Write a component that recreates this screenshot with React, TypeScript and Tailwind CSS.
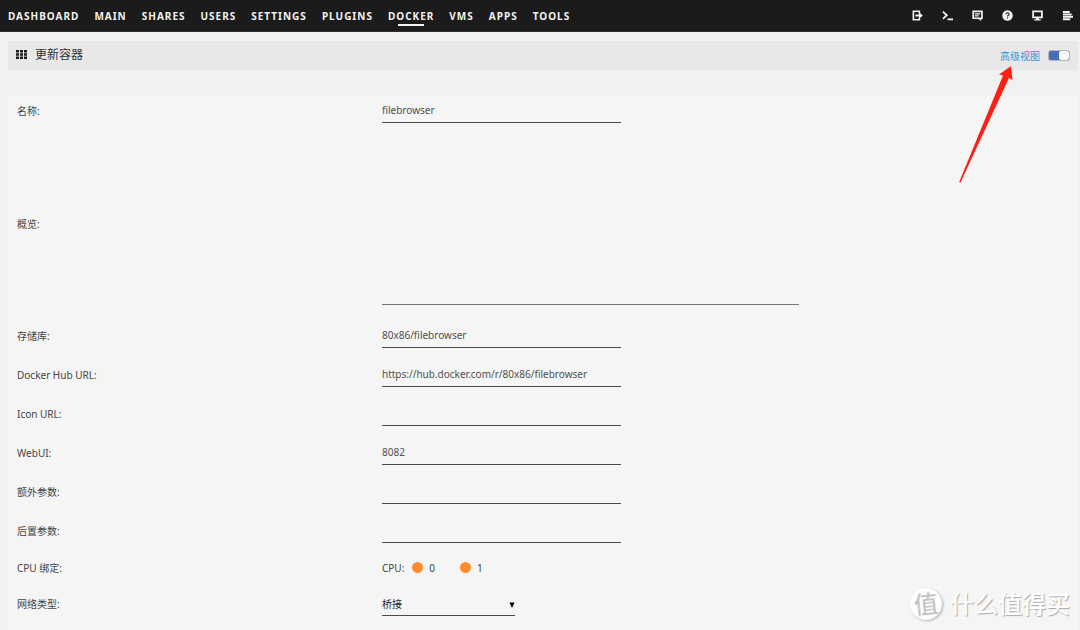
import { useState, type ReactNode } from 'react';

const navItems = ['DASHBOARD', 'MAIN', 'SHARES', 'USERS', 'SETTINGS', 'PLUGINS', 'DOCKER', 'VMS', 'APPS', 'TOOLS'];

const toolIcons: { label: string; art: ReactNode }[] = [
  {
    label: 'Logout',
    art: (
      <>
        <path d="M8 3.200V1.400H1.500v9.200H8V8.800" fill="none" stroke="currentColor" strokeWidth="1.8" />
        <path d="M3.800 4.900H7.500V2.300L11.800 6 7.500 9.700V7.100H3.800z" fill="currentColor" />
      </>
    ),
  },
  {
    label: 'Terminal',
    art: (
      <>
        <path d="M1 1.800l4.200 3.900L1 9.600" fill="none" stroke="currentColor" strokeWidth="2" />
        <path d="M6 9.200h6V11.200H6z" fill="currentColor" />
      </>
    ),
  },
  {
    label: 'Feedback',
    art: (
      <>
        <path d="M1.300 1.500h9.600v7.500H1.300z" fill="none" stroke="currentColor" strokeWidth="1.8" />
        <path d="M6 9h4v3z" fill="currentColor" />
        <path d="M3 4.200h6M3 6.500h4.400" stroke="currentColor" strokeWidth="1.400" />
      </>
    ),
  },
  {
    label: 'Help',
    art: (
      <>
        <circle cx="6" cy="6" r="5.7" fill="currentColor" />
        <path d="M4.300 4.700c.1-2.300 3.500-2.100 3.400-.1C7.700 5.800 6 5.700 6 7.200" fill="none" stroke="#1b1b1b" strokeWidth="1.2" />
        <path d="M5.400 8.100h1.200v1.200H5.400z" fill="#1b1b1b" />
      </>
    ),
  },
  {
    label: 'Info',
    art: (
      <>
        <path d="M1.200 1.500h9.600v6.500H1.200z" fill="none" stroke="currentColor" strokeWidth="1.900" />
        <path d="M4.500 8.500h3V10h2v1.500h-7V10h2z" fill="currentColor" />
      </>
    ),
  },
  {
    label: 'Log',
    art: <path d="M1 1h7.500v2.200H1zM1 3.700h9.500v2H1zM1 6.300h11v2.100H1zM1 9h8v2.200H1z" fill="currentColor" />,
  },
];

const inputClass = 'h-[22px] w-[239px] border-b border-[#4a4a4a] bg-transparent pb-1 text-[#4f4f4f] outline-none';

function Row({ id, label, children }: { id?: string; label: string; children: ReactNode }) {
  return (
    <div className="flex min-h-[39px] items-center pb-[5px]">
      <div className="w-[34.4%] shrink-0 pb-0.5">
        <label htmlFor={id}>{label}</label>
      </div>
      {children}
    </div>
  );
}

function TextRow({ id, label, value = '' }: { id: string; label: string; value?: string }) {
  return (
    <Row id={id} label={label}>
      <input id={id} type="text" defaultValue={value} className={inputClass} />
    </Row>
  );
}

function Header() {
  return (
    <header className="flex h-8 items-center justify-between border-b border-[#2f2f2f] bg-[#1b1b1b] pl-2 pr-[7px] text-[#f2f2f2]">
      <nav className="flex gap-[15px] text-[10px] font-bold leading-4 tracking-[1px]">
        {navItems.map(item => (
          <a key={item} href="#" className="relative">
            {item}
            {item === 'DOCKER' && <span className="absolute inset-x-2.5 -bottom-0.5 h-0.5 bg-[#f2f2f2]" />}
          </a>
        ))}
      </nav>
      <div className="flex gap-[19px]">
        {toolIcons.map(icon => (
          <button key={icon.label} type="button" aria-label={icon.label}>
            <svg viewBox="0 0 12 12" className="size-[11px]">{icon.art}</svg>
          </button>
        ))}
      </div>
    </header>
  );
}

function TitleBar() {
  const [advanced, setAdvanced] = useState(true);
  return (
    <div className="flex h-[29px] items-center justify-between bg-[#e8e8e8] px-2">
      <h1 className="flex items-center gap-2 pb-0.5 text-xs text-[#333]">
        <svg viewBox="0 0 11 9" className="h-[9px] w-[11px] fill-[#1b1b1b]">
          <path d="M0 0h3v2.500H0zM4 0h3v2.500H4zM8 0h3v2.500H8zM0 3.300h3v2.500H0zM4 3.300h3v2.500H4zM8 3.300h3v2.500H8zM0 6.500h3V9H0zM4 6.500h3V9H4zM8 6.500h3V9H8z" />
        </svg>
        更新容器
      </h1>
      <label className="flex cursor-pointer items-center gap-2 text-[#2f9bd6]">
        高级视图
        <input type="checkbox" role="switch" checked={advanced} onChange={e => setAdvanced(e.target.checked)} className="peer sr-only" />
        <span className="flex h-[11px] w-[22px] overflow-hidden rounded-[3px] border border-[#b5b5b5] bg-[#fafafa] peer-checked:bg-[#486dba]">
          <span className={`h-full w-[10px] rounded-[2px] bg-[#fafafa] ${advanced ? 'ml-auto' : ''}`} />
        </span>
      </label>
    </div>
  );
}

function CpuBox({ core }: { core: string }) {
  return (
    <label className="flex items-center gap-1.5">
      <input type="checkbox" defaultChecked className="size-[11px] appearance-none rounded-full bg-[#ff8c2f]" />
      {core}
    </label>
  );
}

export default function App() {
  return (
    <div className="relative flex min-h-screen flex-col bg-[#f1f1f1] font-['Noto_Sans','Noto_Sans_CJK_SC',sans-serif] text-[10px] leading-4 text-[#444]">
      <Header />
      <main className="flex flex-1 flex-col pl-2 pr-0.5 pt-[9px]">
        <TitleBar />
        <form className="mt-[25px] flex-1 bg-[#f5f5f5] pl-[9px]">
          <TextRow id="name" label="名称:" value="filebrowser" />
          <Row id="overview" label="概览:">
            <textarea id="overview" className="my-2.5 h-[161px] w-[39.3%] resize-none border-b border-[#777] bg-transparent outline-none" />
          </Row>
          <TextRow id="repository" label="存储库:" value="80x86/filebrowser" />
          <TextRow id="registry" label="Docker Hub URL:" value="https://hub.docker.com/r/80x86/filebrowser" />
          <TextRow id="icon" label="Icon URL:" />
          <TextRow id="webui" label="WebUI:" value="8082" />
          <TextRow id="extra" label="额外参数:" />
          <TextRow id="post" label="后置参数:" />
          <div className="flex h-[34px] items-center pb-[7px]">
            <span className="w-[34.4%] shrink-0">CPU 绑定:</span>
            <span className="mr-2">CPU:</span>
            <div className="flex gap-[25px]">
              <CpuBox core="0" />
              <CpuBox core="1" />
            </div>
          </div>
          <Row id="network" label="网络类型:">
            <div className="relative">
              <select id="network" className="h-[22px] w-[133px] appearance-none border-b border-[#4a4a4a] bg-transparent pb-0.5 text-[#222] outline-none">
                <option>桥接</option>
                <option>Host</option>
                <option>None</option>
              </select>
              <svg viewBox="0 0 6 6" className="pointer-events-none absolute right-0 top-2 size-1.5 fill-black">
                <path d="M.500.500h5L3 6z" />
              </svg>
            </div>
          </Row>
        </form>
      </main>

      <svg viewBox="0 0 56 118" className="pointer-events-none absolute right-[65px] top-[66px] h-[118px] w-[56px] fill-[#ff2015]">
        <path d="M52 0L40 8.500l4 1L.200 116l1.200.700L50 12l3.500 2z" />
      </svg>

      <div className="pointer-events-none absolute bottom-2.5 right-2.5 flex items-center gap-2 text-2xl font-medium text-white">
        <span className="flex size-8 -rotate-6 items-center justify-center rounded-full bg-white text-[#c2c2c2] drop-shadow-[1px_1px_1px_#aaa]">值</span>
        <span className="[text-shadow:1px_1px_1px_#aaa]">什么值得买</span>
      </div>
    </div>
  );
}
